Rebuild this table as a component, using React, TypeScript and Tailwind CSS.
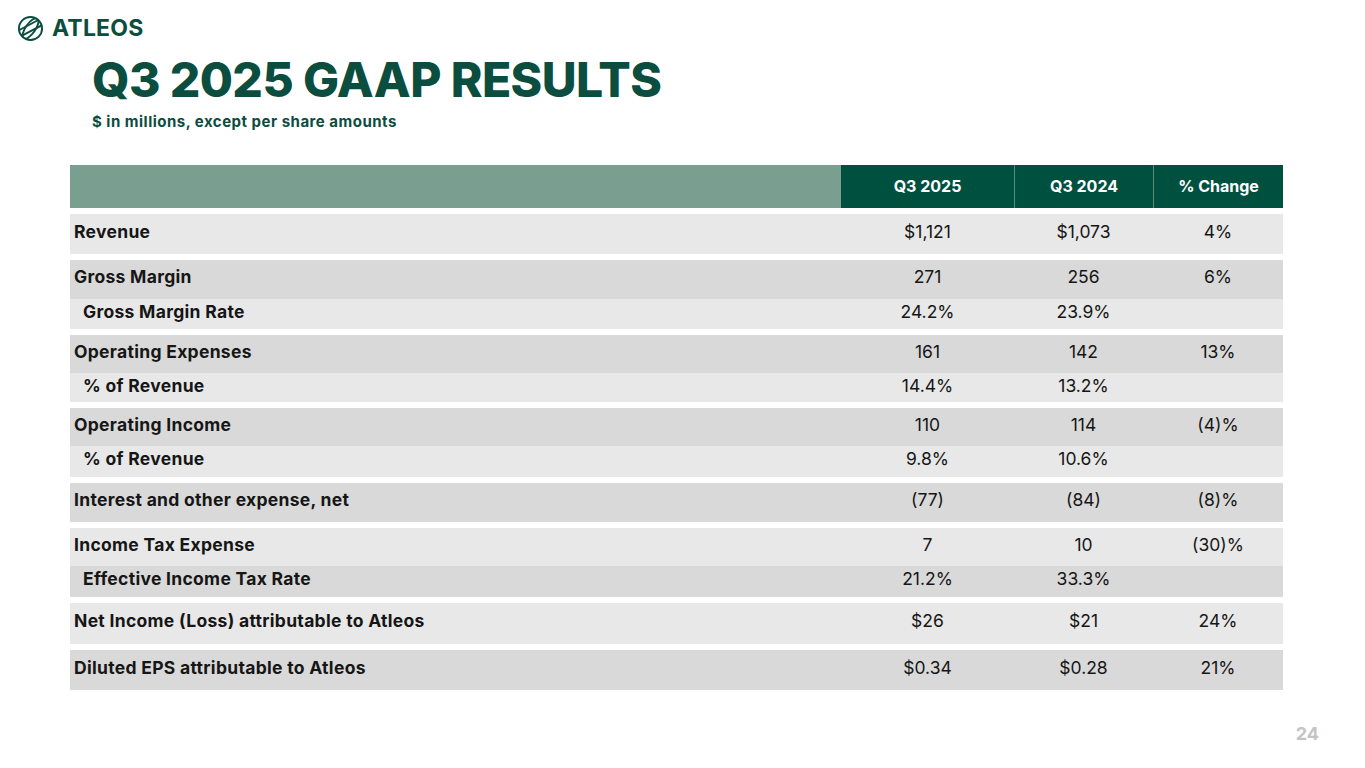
import React from 'react';

type Row = { label: string; sub?: boolean; q25: string; q24: string; chg: string; h: string; shade: 'light' | 'dark' };

// groups of rows, separated by a thin white gap
const groups: Row[][] = [
  [{ label: 'Revenue', q25: '$1,121', q24: '$1,073', chg: '4%', h: 'h-[40px]', shade: 'light' }],
  [
    { label: 'Gross Margin', q25: '271', q24: '256', chg: '6%', h: 'h-[39px]', shade: 'dark' },
    { label: 'Gross Margin Rate', sub: true, q25: '24.2%', q24: '23.9%', chg: '', h: 'h-[30px]', shade: 'light' },
  ],
  [
    { label: 'Operating Expenses', q25: '161', q24: '142', chg: '13%', h: 'h-[38px]', shade: 'dark' },
    { label: '% of Revenue', sub: true, q25: '14.4%', q24: '13.2%', chg: '', h: 'h-[29px]', shade: 'light' },
  ],
  [
    { label: 'Operating Income', q25: '110', q24: '114', chg: '(4)%', h: 'h-[38px]', shade: 'dark' },
    { label: '% of Revenue', sub: true, q25: '9.8%', q24: '10.6%', chg: '', h: 'h-[31px]', shade: 'light' },
  ],
  [{ label: 'Interest and other expense, net', q25: '(77)', q24: '(84)', chg: '(8)%', h: 'h-[39px]', shade: 'dark' }],
  [
    { label: 'Income Tax Expense', q25: '7', q24: '10', chg: '(30)%', h: 'h-[38px]', shade: 'light' },
    { label: 'Effective Income Tax Rate', sub: true, q25: '21.2%', q24: '33.3%', chg: '', h: 'h-[31px]', shade: 'dark' },
  ],
  [{ label: 'Net Income (Loss) attributable to Atleos', q25: '$26', q24: '$21', chg: '24%', h: 'h-[41px]', shade: 'light' }],
  [{ label: 'Diluted EPS attributable to Atleos', q25: '$0.34', q24: '$0.28', chg: '21%', h: 'h-[40px]', shade: 'dark' }],
];

const cols = 'grid grid-cols-[771px_173px_139px_130px]';

function Globe() {
  return (
    <svg width="27" height="27" viewBox="0 0 28 28" fill="none" stroke="#0b4d3e" strokeWidth="2" strokeLinecap="round">
      <defs>
        <clipPath id="globe-clip">
          <circle cx="14" cy="14" r="12" />
        </clipPath>
      </defs>
      <circle cx="14" cy="14" r="12" />
      <g clipPath="url(#globe-clip)">
        <ellipse cx="14" cy="14" rx="5" ry="12.5" transform="rotate(35 14 14)" />
        <g transform="rotate(-28 14 14)">
          <line x1="0" y1="10" x2="28" y2="10" />
          <line x1="0" y1="16.5" x2="28" y2="16.5" />
        </g>
      </g>
    </svg>
  );
}

function TableRow({ row }: { row: Row }) {
  return (
    <div className={`${cols} ${row.h} ${row.shade === 'light' ? 'bg-[#e8e8e8]' : 'bg-[#d9d9d9]'} items-center pb-[4px] text-[17.5px] text-[#161616]`}>
      <div className={`font-bold tracking-[0.3px] ${row.sub ? 'pl-[13px]' : 'pl-[4px]'}`}>{row.label}</div>
      <div className="text-center">{row.q25}</div>
      <div className="text-center">{row.q24}</div>
      <div className="text-center">{row.chg}</div>
    </div>
  );
}

export default function App() {
  return (
    <div className="w-[1365px] h-[768px] bg-white flex flex-col overflow-hidden font-['Inter',sans-serif]">
      {/* logo */}
      <div className="flex items-center gap-[8px] pl-[17px] pt-[14px] h-[42px]">
        <Globe />
        <span className="text-[23px] font-bold text-[#0b4d3e] leading-none tracking-[0.2px]">ATLEOS</span>
      </div>

      <div className="pl-[92px] mt-[14px]">
        <h1 className="text-[48px] font-extrabold leading-none tracking-[-0.6px] text-[#0b4d3e]">Q3 2025 GAAP RESULTS</h1>
        <p className="mt-[10px] text-[15px] font-bold leading-none tracking-[0.5px] text-[#0b4d3e]">$ in millions, except per share amounts</p>
      </div>

      {/* table */}
      <div className="ml-[70px] w-[1213px] mt-[36px] flex flex-col gap-[6px]">
        <div className={`${cols} h-[43px] text-[16px] font-bold text-white`}>
          <div className="bg-[#7a9e8f]" />
          <div className="bg-[#00503f] flex items-center justify-center pb-[2px]">Q3 2025</div>
          <div className="bg-[#00503f] border-l border-[#5b8a7b] flex items-center justify-center pb-[2px]">Q3 2024</div>
          <div className="bg-[#00503f] border-l border-[#5b8a7b] flex items-center justify-center pb-[2px]">% Change</div>
        </div>
        {groups.map((g, i) => (
          <div key={i} className="flex flex-col">
            {g.map((r) => (
              <TableRow key={r.label + r.q25} row={r} />
            ))}
          </div>
        ))}
      </div>

      <div className="mt-auto mb-[25px] pr-[46px] flex justify-end">
        <span className="text-[18px] font-bold text-[#c4c4c4] leading-none">24</span>
      </div>
    </div>
  );
}
